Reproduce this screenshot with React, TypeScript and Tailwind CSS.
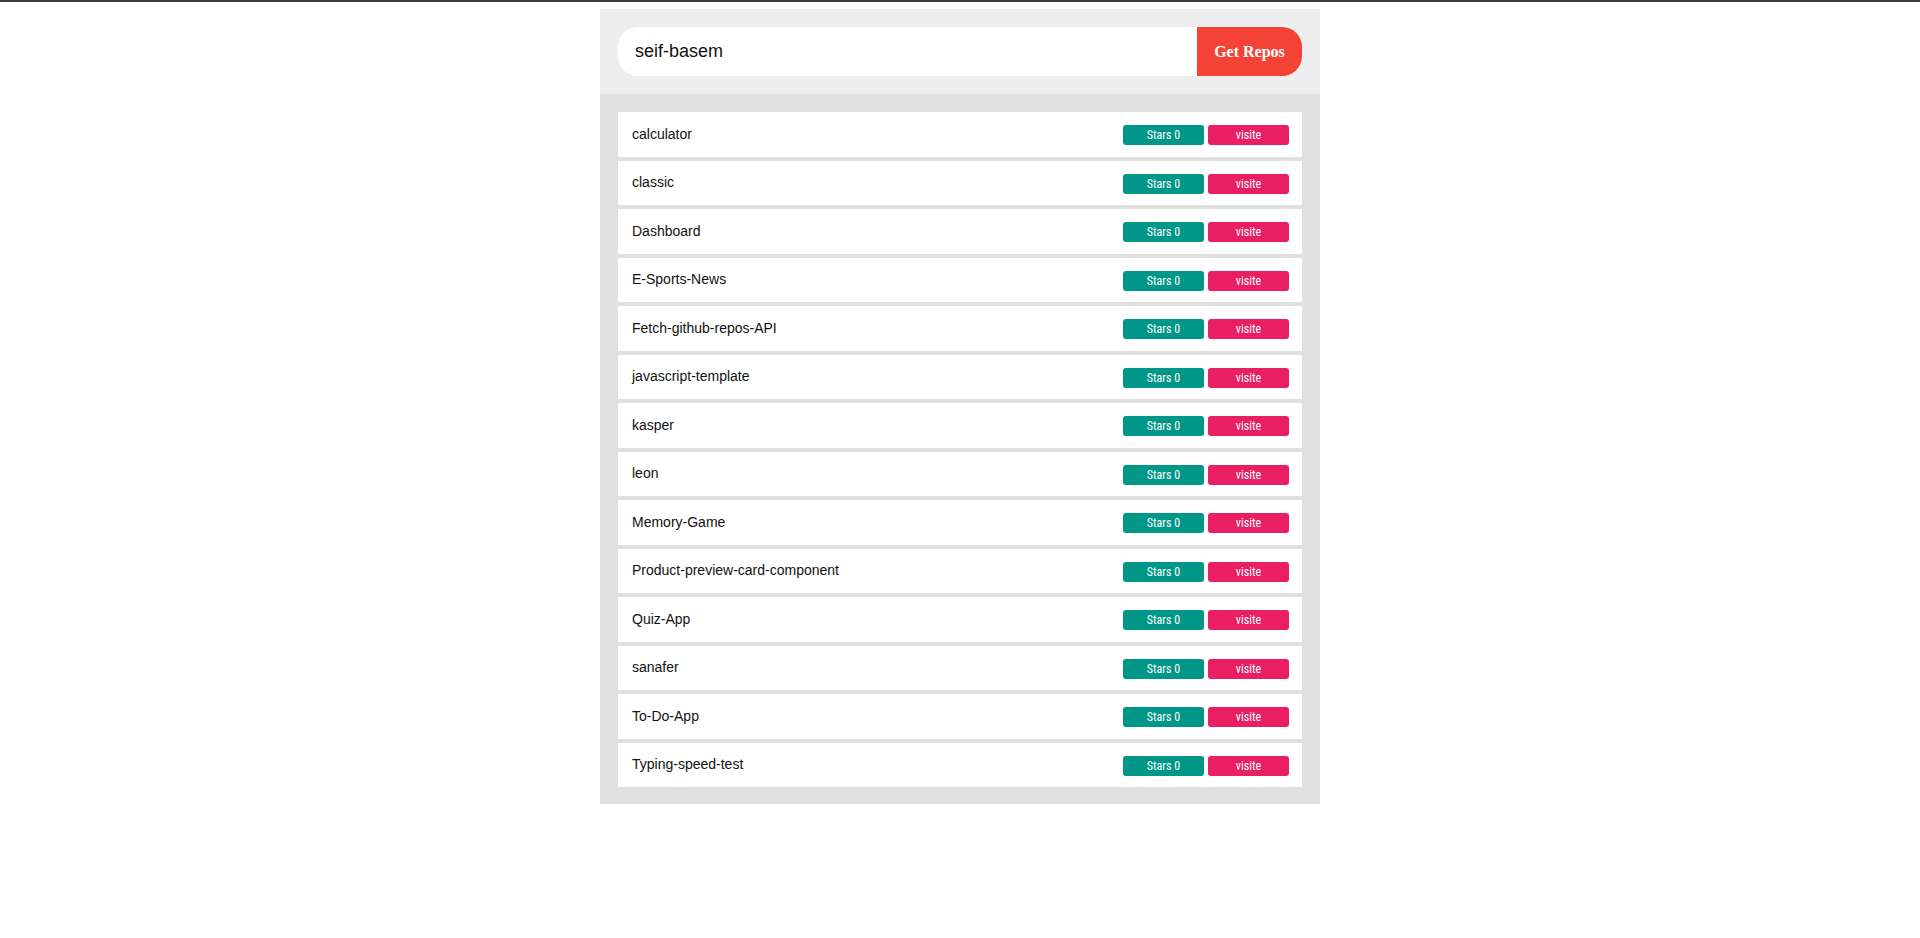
import React, { useState } from 'react'

interface Repo {
  name: string
  stars: number
}

const repos: Repo[] = [
  { name: 'calculator', stars: 0 },
  { name: 'classic', stars: 0 },
  { name: 'Dashboard', stars: 0 },
  { name: 'E-Sports-News', stars: 0 },
  { name: 'Fetch-github-repos-API', stars: 0 },
  { name: 'javascript-template', stars: 0 },
  { name: 'kasper', stars: 0 },
  { name: 'leon', stars: 0 },
  { name: 'Memory-Game', stars: 0 },
  { name: 'Product-preview-card-component', stars: 0 },
  { name: 'Quiz-App', stars: 0 },
  { name: 'sanafer', stars: 0 },
  { name: 'To-Do-App', stars: 0 },
  { name: 'Typing-speed-test', stars: 0 },
]

const App: React.FC = () => {
  const [user, setUser] = useState('seif-basem')

  return (
    <div className="min-h-screen bg-white border-t-2 border-[#3d3d3d] font-['Liberation_Sans',Arial,sans-serif]">
      <div className="mx-auto mt-[7px] w-[720px]">
        {/* search */}
        <div className="bg-[#eeeeee] p-[18px] flex">
          <input
            type="text"
            value={user}
            onChange={(e) => setUser(e.target.value)}
            className="flex-1 h-[49px] bg-white rounded-l-[20px] pl-[17px] text-[18px] text-[#111] outline-none"
          />
          <button className="w-[105px] h-[49px] bg-[#f44336] text-white rounded-r-[20px] text-[16px] font-bold font-['Liberation_Serif',serif]">
            Get Repos
          </button>
        </div>

        {/* repos */}
        <div className="bg-[#e0e0e0] pt-[18px] pb-[17px] px-[18px] flex flex-col gap-[4px]">
          {repos.map((repo) => (
            <div
              key={repo.name}
              className="h-[44.5px] bg-white flex items-center justify-between pl-[14px] pr-[13px]"
            >
              <span className="text-[14px] text-[#111]">{repo.name}</span>
              <div className="flex gap-[4px] pt-[2px] font-['Liberation_Sans_Narrow','Roboto_Condensed',Arial,sans-serif]">
                <span className="w-[81px] h-[20px] rounded-[3px] bg-[#009688] text-white text-[12px] flex items-center justify-center">
                  Stars {repo.stars}
                </span>
                <a
                  href="#"
                  className="w-[81px] h-[20px] rounded-[3px] bg-[#e91e63] text-white text-[12px] flex items-center justify-center"
                >
                  visite
                </a>
              </div>
            </div>
          ))}
        </div>
      </div>
    </div>
  )
}

export default App
